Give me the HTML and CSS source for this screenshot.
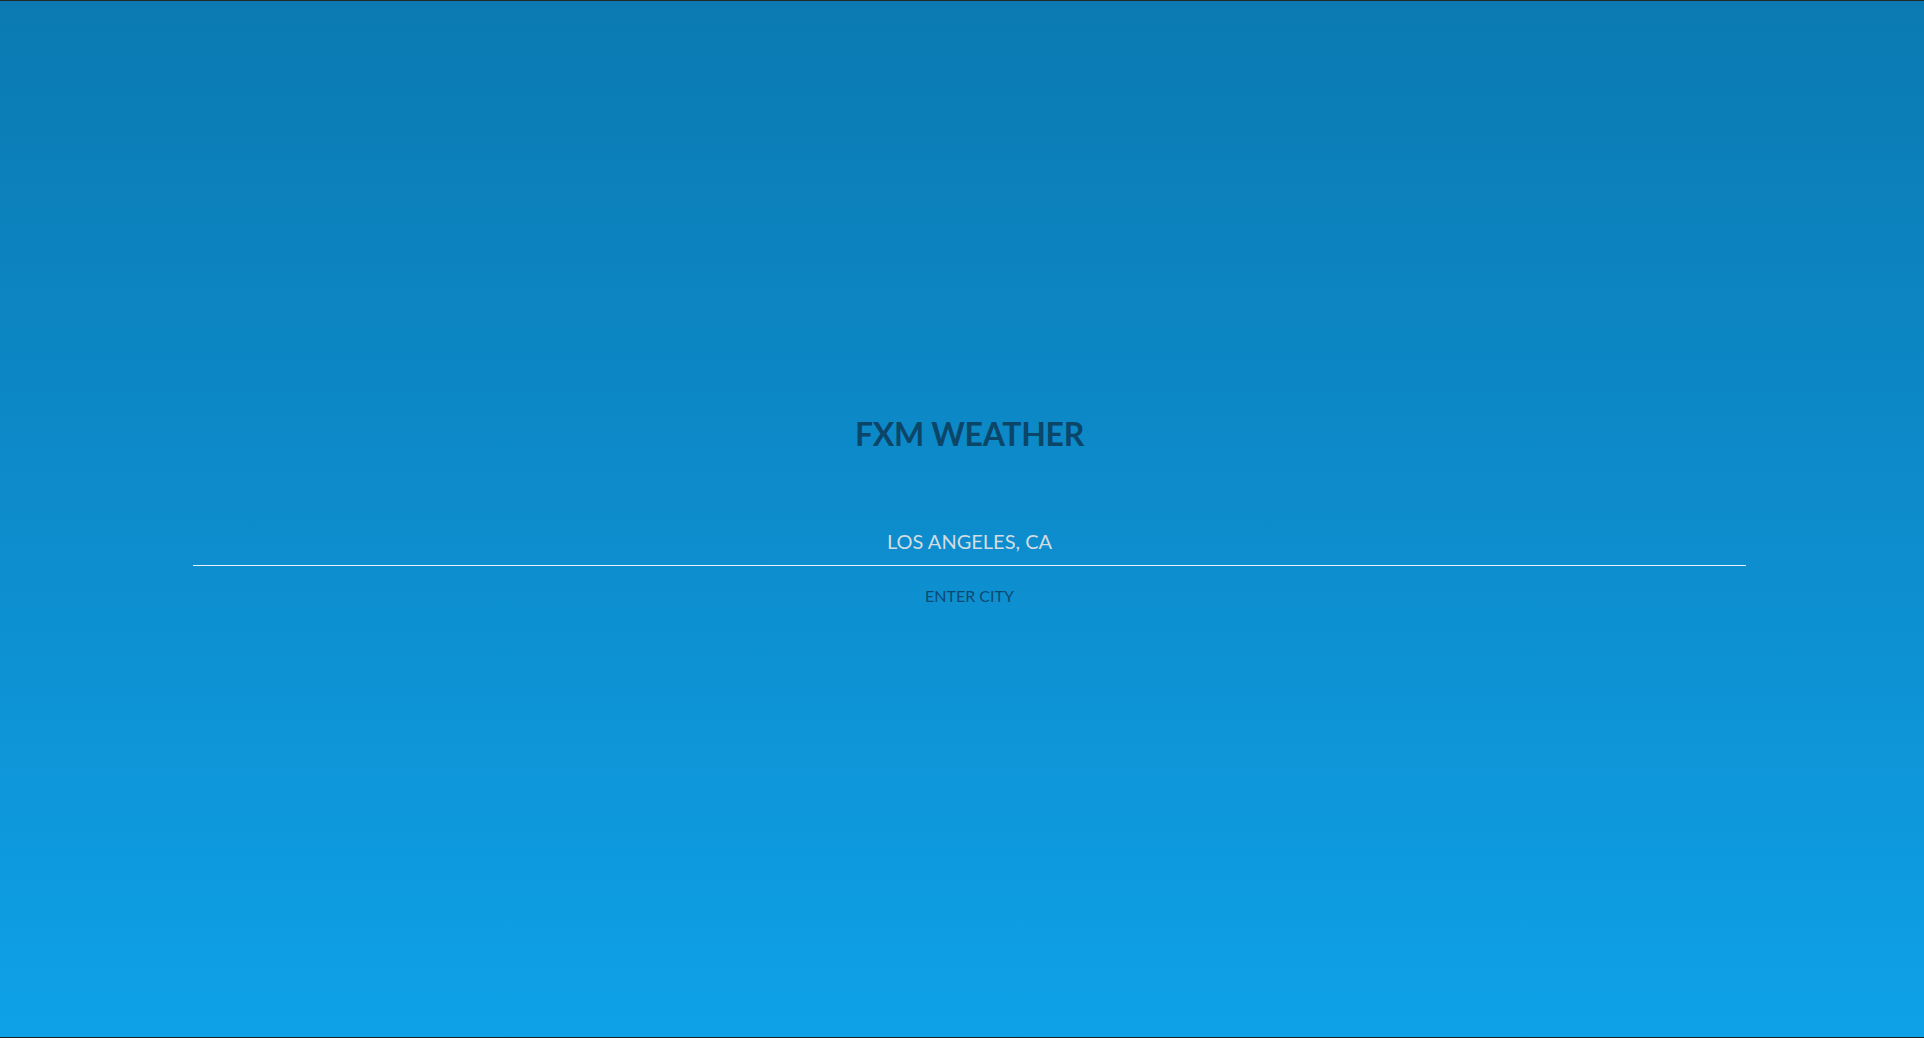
FILE: index.html
```html
<!DOCTYPE html>
<html lang="en">
<head>
<meta charset="utf-8">
<title>FXM Weather</title>
<link rel="stylesheet" href="styles.css">
</head>
<body>
<div class="page">
  <main class="search">
    <h1 class="title">FXM WEATHER</h1>
    <input class="city-input" type="text" value="LOS ANGELES, CA">
    <label class="city-label">ENTER CITY</label>
  </main>
</div>
</body>
</html>
```

FILE: styles.css
```css
html, body {
  margin: 0;
  padding: 0;
}
body {
  font-family: Lato, "Open Sans", sans-serif;
}
.page {
  box-sizing: border-box;
  height: 1038px;
  border-top: 1px solid #23282c;
  border-bottom: 1px solid #1c2024;
  background: linear-gradient(to bottom, #0b7ab2 0%, #0d8ccc 50%, #0ea1e7 100%);
  padding: 414px 178px 0 193px;
}
.search {
  display: flex;
  flex-direction: column;
  align-items: stretch;
  text-align: center;
}
.title {
  margin: 0;
  font-size: 32px;
  font-weight: 700;
  line-height: 38px;
  color: #0b4568;
  letter-spacing: -0.3px;
}
.city-input {
  margin: 69px 0 0 0;
  padding: 7px 0 12px 0;
  border: 0;
  border-bottom: 1px solid #e8f2f8;
  background: transparent;
  font-family: Lato, "Open Sans", sans-serif;
  font-size: 20px;
  line-height: 24px;
  height: 44px;
  box-sizing: border-box;
  color: #d2dce2;
  text-align: center;
  outline: none;
}
.city-label {
  margin-top: 20px;
  font-size: 16px;
  line-height: 19px;
  color: #0b4a70;
}
```
